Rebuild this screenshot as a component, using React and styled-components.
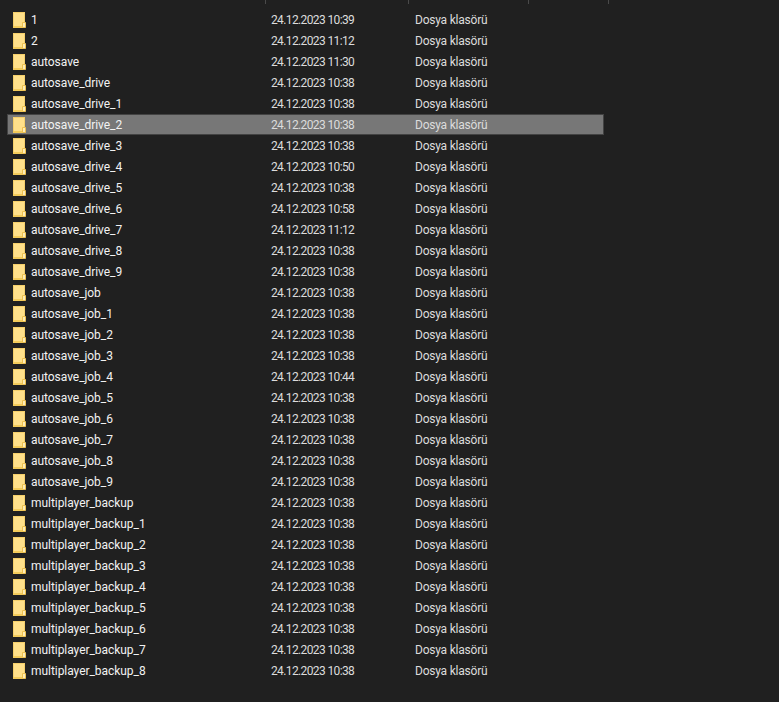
import React from "react";
import styled, { createGlobalStyle } from "styled-components";

const GlobalStyle = createGlobalStyle`
  html, body {
    margin: 0;
    background: #202020;
  }
`;

const Window = styled.div`
  width: 779px;
  height: 702px;
  overflow: hidden;
  background: #202020;
  color: #f0f0f0;
  font-family: Roboto, "Open Sans", sans-serif;
  font-size: 12px;
`;

const HeaderBar = styled.div`
  display: flex;
  height: 9px;
  padding-left: 7px;
`;

const HeaderCell = styled.div`
  width: ${(p) => p.$width}px;
  height: 4px;
  box-sizing: border-box;
  border-right: 1px solid #4a4a4a;
`;

const List = styled.div`
  display: flex;
  flex-direction: column;
`;

const Row = styled.div`
  display: grid;
  grid-template-columns: 24px 240px 144px 1fr;
  align-items: center;
  box-sizing: border-box;
  width: 597px;
  height: 21px;
  margin-left: 7px;
  background: ${(p) => (p.$selected ? "#777777" : "transparent")};
  box-shadow: ${(p) => (p.$selected ? "inset 0 0 0 1px #434343" : "none")};
`;

const IconCell = styled.div`
  display: flex;
  padding-left: 6px;
`;

const Name = styled.span`
  color: #f2f2f2;
  letter-spacing: -0.05px;
`;

const DateText = styled.span`
  color: #dcdcdc;
  letter-spacing: -0.62px;
`;

const TypeText = styled.span`
  color: #dcdcdc;
  letter-spacing: -0.22px;
`;

const FolderIcon = () => (
  <svg width="13" height="16" viewBox="0 0 13 16">
    <rect x="0.5" y="0.5" width="11" height="15" fill="#ffe08a" stroke="#f5cf6a" />
    <rect x="0" y="14" width="12" height="2" fill="#f3cb5a" />
    <path d="M9.5 15.5V10.5H12.5V15.5Z" fill="#ffedb5" stroke="#eec150" />
  </svg>
);

const names = [
  "1",
  "2",
  "autosave",
  "autosave_drive",
  "autosave_drive_1",
  "autosave_drive_2",
  "autosave_drive_3",
  "autosave_drive_4",
  "autosave_drive_5",
  "autosave_drive_6",
  "autosave_drive_7",
  "autosave_drive_8",
  "autosave_drive_9",
  "autosave_job",
  "autosave_job_1",
  "autosave_job_2",
  "autosave_job_3",
  "autosave_job_4",
  "autosave_job_5",
  "autosave_job_6",
  "autosave_job_7",
  "autosave_job_8",
  "autosave_job_9",
  "multiplayer_backup",
  "multiplayer_backup_1",
  "multiplayer_backup_2",
  "multiplayer_backup_3",
  "multiplayer_backup_4",
  "multiplayer_backup_5",
  "multiplayer_backup_6",
  "multiplayer_backup_7",
  "multiplayer_backup_8",
];

const times = {
  "1": "10:39",
  "2": "11:12",
  autosave: "11:30",
  autosave_drive_4: "10:50",
  autosave_drive_6: "10:58",
  autosave_drive_7: "11:12",
  autosave_job_4: "10:44",
};

const App = () => {
  return (
    <Window>
      <GlobalStyle />
      <HeaderBar>
        <HeaderCell $width={259} />
        <HeaderCell $width={143} />
        <HeaderCell $width={120} />
        <HeaderCell $width={80} />
      </HeaderBar>
      <List>
        {names.map((name) => (
          <Row key={name} $selected={name === "autosave_drive_2"}>
            <IconCell>
              <FolderIcon />
            </IconCell>
            <Name>{name}</Name>
            <DateText>24.12.2023 {times[name] || "10:38"}</DateText>
            <TypeText>Dosya klasörü</TypeText>
          </Row>
        ))}
      </List>
    </Window>
  );
};

export default App;
